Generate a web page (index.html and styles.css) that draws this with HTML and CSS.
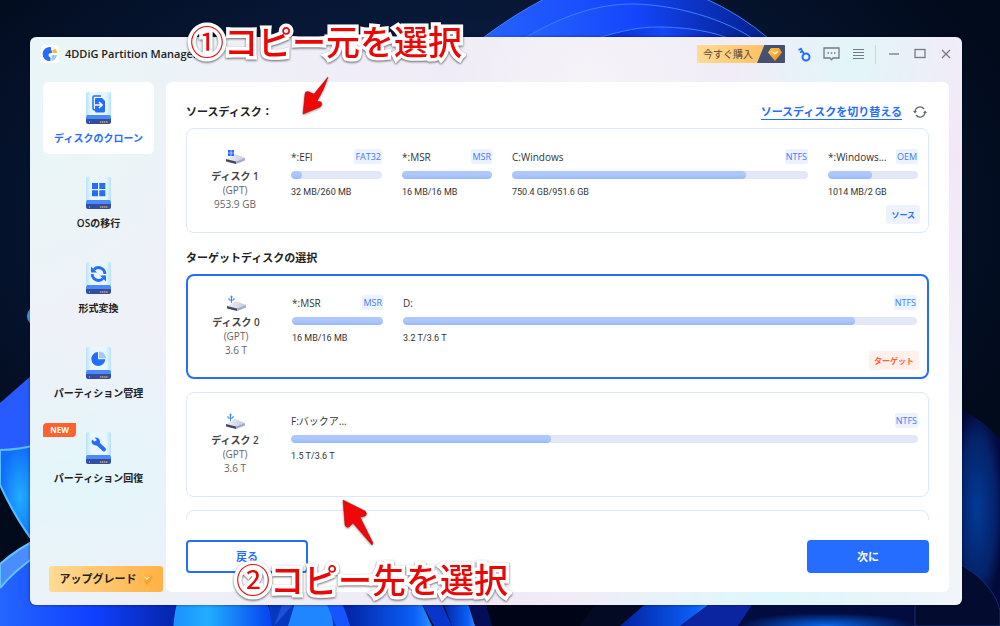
FILE: index.html
```html
<!DOCTYPE html>
<html lang="ja">
<head>
<meta charset="utf-8">
<meta name="viewport" content="width=device-width, initial-scale=1">
<title>4DDiG Partition Manager</title>
<link rel="stylesheet" href="styles.css">
</head>
<body>
<svg class="wallpaper" viewBox="0 0 1000 626" preserveAspectRatio="none" aria-hidden="true">
  <defs>
    <radialGradient id="night" cx="0.45" cy="0.35" r="0.6"><stop offset="0" stop-color="#0d2650"/><stop offset="0.5" stop-color="#08193a"/><stop offset="1" stop-color="#020b1c"/></radialGradient>
    <linearGradient id="petal" x1="0" y1="0" x2="1" y2="0"><stop offset="0" stop-color="#2563ff"/><stop offset="0.5" stop-color="#1545fb"/><stop offset="1" stop-color="#04208c"/></linearGradient>
    <linearGradient id="petalDeep" x1="0" y1="0" x2="1" y2="0"><stop offset="0" stop-color="#0a2cc8"/><stop offset="0.5" stop-color="#1547f8"/><stop offset="1" stop-color="#0620a0"/></linearGradient>
    <linearGradient id="leftBlue" x1="0" y1="0" x2="1" y2="0"><stop offset="0" stop-color="#2466ff"/><stop offset="0.5" stop-color="#1040ff"/><stop offset="1" stop-color="#0422a0"/></linearGradient>
    <radialGradient id="cyan"><stop offset="0" stop-color="#22adff"/><stop offset="1" stop-color="#0f6cff"/></radialGradient>
    <linearGradient id="cyanFold" x1="0" y1="0" x2="1" y2="0"><stop offset="0" stop-color="#1c90ff"/><stop offset="0.35" stop-color="#22adff"/><stop offset="1" stop-color="#0640f0"/></linearGradient>
    <radialGradient id="right"><stop offset="0" stop-color="#033a96"/><stop offset="0.7" stop-color="#052268"/><stop offset="1" stop-color="#03093a"/></radialGradient>
    <linearGradient id="fold" x1="0" y1="0" x2="1" y2="0"><stop offset="0" stop-color="#0220a0"/><stop offset="0.8" stop-color="#0b60f8"/><stop offset="1" stop-color="#2c91ff"/></linearGradient>
    <radialGradient id="glow" cx="0.5" cy="1"><stop offset="0" stop-color="#0868ef"/><stop offset="1" stop-color="#020c40"/></radialGradient>
  </defs>
  <rect width="1000" height="626" fill="url(#night)"/>
  <g stroke="#3a80ff" stroke-width="1">
    <path d="M484 37Q515 14 546 -2H704Q740 14 768 38Z" fill="url(#petal)"/>
    <path d="M525 38C565 14 600 4 632 4S715 14 752 38Z" fill="url(#petal)"/>
    <path d="M598 38C625 30 640 27 658 27S705 29 728 38Z" fill="url(#petalDeep)"/>
  </g>
  <circle cx="37" cy="316" r="10" fill="#4799ef"/>
  <path d="M0 403L40 368V450H0Z" fill="#285bff"/>
  <path d="M0 450Q18 450 40 444V550Q18 524 0 485Z" fill="url(#cyan)" stroke="#59bfff" stroke-width="2"/>
  <path d="M0 564Q18 548 40 538V626H0Z" fill="#4a8dff" stroke="#63c3ff" stroke-width="2"/>
  <path d="M0 588Q14 571 40 552V590H185V626H0Z" fill="url(#leftBlue)"/>
  <path d="M0 588Q14 571 36 556" fill="none" stroke="#63c3ff" stroke-width="2"/>
  <path d="M178 600H265Q275 615 272 640H173Q173 615 178 600Z" fill="url(#cyanFold)"/>
  <path d="M268 600H345L352 626H272Z" fill="#0638bd"/>
  <path d="M296 600H325Q333 612 333 626H288Z" fill="#2086ff"/>
  <path d="M274 626L284 600H297Z" fill="#1b50d8"/>
  <path d="M325 600H340L352 626H336Z" fill="#1455ff"/>
  <path d="M342 600H420L432 626H350Z" fill="url(#fold)"/>
  <path d="M420 600H440L452 626H434Z" fill="#0836ca"/>
  <path d="M442 600H467L475 626H452Z" fill="url(#fold)"/>
  <path d="M468 600H598L580 626H476Z" fill="#000417"/>
  <path d="M485 600L492 626H476L468 600Z" fill="#020f58"/>
  <path d="M598 600H650L620 626H580Z" fill="#030a24"/>
  <path d="M650 600H715L680 626H620Z" fill="url(#fold)"/>
  <path d="M715 600H760L738 626H680Z" fill="#0b25a0"/>
  <path d="M755 600H915V626H738Z" fill="url(#glow)"/>
  <path d="M915 600H1000V626H915Z" fill="#000105"/>
  <path d="M950 407Q980 414 1004 444V610L950 560Z" fill="url(#right)"/>
  <path d="M955 562Q992 580 1000 610V626H915V560Z" fill="#030c2f" stroke="#102d78"/>
</svg>

<svg class="symbols" aria-hidden="true">
  <defs>
    <linearGradient id="caseFill" x1="0" y1="0" x2="1" y2="0"><stop offset="0" stop-color="#b5e2fb"/><stop offset="0.2" stop-color="#e8f7ff"/><stop offset="0.8" stop-color="#e8f7ff"/><stop offset="1" stop-color="#b5e2fb"/></linearGradient>
    <linearGradient id="gem" x1="0" y1="0" x2="1" y2="1"><stop offset="0" stop-color="#ffd35c"/><stop offset="1" stop-color="#f57c0b"/></linearGradient>
    <linearGradient id="slab" x1="0" y1="0" x2="1" y2="0"><stop offset="0" stop-color="#f1f2f9"/><stop offset="1" stop-color="#c4c9df"/></linearGradient>
    <symbol id="case" viewBox="0 0 25 33">
      <path d="M2 0H23Q25 0 25 2V26H0V2Q0 0 2 0Z" fill="url(#caseFill)"/>
      <path d="M1 23H24L25 25V28H0V25Z" fill="#4b8afa"/>
      <path d="M0 27H25V30Q25 32 23 32H2Q0 32 0 30Z" fill="#344e9f"/>
      <path d="M3 30H4M14 30H22" stroke="#c9a274" stroke-width="1.500" stroke-dasharray="1.500 .5"/>
    </symbol>
    <symbol id="diamond" viewBox="0 0 14 13">
      <path d="M3 0H11L14 4.500L7 13L0 4.500Z" fill="url(#gem)"/>
      <path d="M3 0H11L9.500 4L7 6L4.500 4Z" fill="#ffb52f"/>
      <path d="M4.500 3.500L7 6L9.500 3.500" fill="none" stroke="#fff" stroke-width="1.200"/>
    </symbol>
    <symbol id="drive" viewBox="0 0 19 10">
      <path d="M0 5L9 0L19 4L10 8Z" fill="url(#slab)"/>
      <path d="M0 5L10 7.500V10L0 7.500Z" fill="#454a62"/>
      <path d="M10 7.500L19 4V6.500L10 10Z" fill="#a5abc7"/>
    </symbol>
    <symbol id="winDrive" viewBox="0 0 19 16">
      <use href="#drive" y="5" width="19" height="10"/>
      <path d="M2 1H4.700V3.700H2ZM5.300 1H8V3.700H5.300ZM2 4.300H4.700V7H2ZM5.300 4.300H8V7H5.300Z" fill="#246dff"/>
    </symbol>
    <symbol id="usbDrive" viewBox="0 0 19 16">
      <use href="#drive" y="6" width="19" height="10"/>
      <path d="M4.500 .2L6 2.200H3Z" fill="#3c82ff"/>
      <path d="M4.500 8V2M2 3V5H7V3" fill="none" stroke="#3c82ff"/>
    </symbol>
  </defs>
</svg>

<main class="window">
  <header class="titlebar">
    <svg class="logo" viewBox="0 0 18 18" aria-hidden="true">
      <rect width="18" height="18" rx="3" fill="#fff"/>
      <path d="M10 2.200A7 7 0 1 0 9.500 16V12.500A3 3 0 0 1 8 8.500L11 8V5.500H10Z" fill="#246dff"/>
      <path d="M10.500 10H16A7 7 0 0 1 10.500 16Z" fill="#a7c5ff"/>
      <path d="M11.500 8V5L14 3.500L16.500 8Z" fill="#ffb52e"/>
    </svg>
    <h1 class="app-name">4DDiG Partition Manager</h1>
    <button class="buy"><span class="buy-text">今すぐ購入</span><span class="buy-gem"><svg class="gem" aria-hidden="true"><use href="#diamond"/></svg></span></button>
    <button class="tool key" aria-label="登録"><svg viewBox="0 0 13 15" width="13" height="15"><circle cx="8" cy="10" r="3.500" fill="none" stroke="#246dff" stroke-width="2"/><path d="M6 7L2.500 1M.5 3L3.500 1.500M2 5.500L5 4" fill="none" stroke="#246dff" stroke-width="1.700"/></svg></button>
    <button class="tool chat" aria-label="フィードバック"><svg viewBox="0 0 17 14" width="17" height="14" fill="none" stroke="#777983" stroke-width="1.300"><path d="M1 1H16V11H10L8.500 12.800L7 11H1Z"/><path d="M4.500 6H6M7.800 6H9.300M11 6H12.500"/></svg></button>
    <button class="tool menu" aria-label="メニュー"><svg viewBox="0 0 11 12" width="11" height="12"><path d="M0 1.500H11M0 4.500H11M0 7.500H11M0 10.500H11" stroke="#777983"/></svg></button>
    <span class="divider"></span>
    <button class="tool minimize" aria-label="最小化"><svg viewBox="0 0 12 12" width="12" height="12"><path d="M1 6H11" stroke="#777983" stroke-width="1.300"/></svg></button>
    <button class="tool" aria-label="最大化"><svg viewBox="0 0 12 12" width="12" height="12"><rect x="1" y="1.500" width="10" height="8" fill="none" stroke="#777983" stroke-width="1.300"/></svg></button>
    <button class="tool" aria-label="閉じる"><svg viewBox="0 0 12 12" width="12" height="12"><path d="M2 2L10 10M10 2L2 10" stroke="#777983" stroke-width="1.300"/></svg></button>
  </header>

  <div class="body">
    <nav class="sidebar">
      <button class="nav-item active">
        <svg class="nav-icon" viewBox="0 0 25 33"><use href="#case"/><path d="M7 16V5Q7 4 8 4H15" fill="none" stroke="#246dff" stroke-width="1.500"/><path d="M7 16Q7 18 9 18" fill="none" stroke="#246dff" stroke-width="1.500"/><path d="M10 6H16L19 9V19Q19 20.500 17.500 20.500H10.500Q9 20.500 9 19V7Q9 6 10 6Z" fill="#246dff"/><path d="M9 13H15.500M13 10L16 13L13 16" fill="none" stroke="#fff" stroke-width="1.600"/></svg>
        <span>ディスクのクローン</span>
      </button>
      <button class="nav-item">
        <svg class="nav-icon" viewBox="0 0 25 33"><use href="#case"/><path d="M6 6H12V12H6ZM13.300 6H19.300V12H13.300ZM6 13.300H12V19.300H6ZM13.300 13.300H19.300V19.300H13.300Z" fill="#246dff"/></svg>
        <span>OSの移行</span>
      </button>
      <button class="nav-item">
        <svg class="nav-icon" viewBox="0 0 25 33"><use href="#case"/><path d="M8 7.500A6.300 6.300 0 0 1 18.800 12M17 16.500A6.300 6.300 0 0 1 6.200 12" fill="none" stroke="#246dff" stroke-width="2.800"/><path d="M5 4.500V10.500H11ZM20 19.500V13.500H14Z" fill="#246dff"/></svg>
        <span>形式変換</span>
      </button>
      <button class="nav-item">
        <svg class="nav-icon" viewBox="0 0 25 33"><use href="#case"/><path d="M12 5A7 7 0 1 0 19.300 12.300H12Z" fill="#246dff"/><path d="M13 4.500A7 7 0 0 1 20 11.300H13Z" fill="#a5c5ff"/></svg>
        <span>パーティション管理</span>
      </button>
      <button class="nav-item">
        <svg class="nav-icon" viewBox="0 0 25 33"><use href="#case"/><path d="M10.500 10.500L18 17.500" stroke="#246dff" stroke-width="4" stroke-linecap="round"/><path d="M8.500 5.500L10.500 7.500V9.500H8.500L6 7.500Q4.500 11 8 13Q13 14.500 14 10Q14 5 8.500 5.500Z" fill="#246dff"/></svg>
        <span>パーティション回復</span>
        <span class="new">NEW</span>
      </button>
      <button class="upgrade">アップグレード<svg class="gem" aria-hidden="true"><use href="#diamond"/></svg></button>
    </nav>

    <section class="panel">
      <div class="panel-head">
        <h2 class="heading">ソースディスク：</h2>
        <a class="switch" href="#">ソースディスクを切り替える</a>
        <button class="tool" aria-label="更新"><svg viewBox="0 0 14 14" width="14" height="14"><path d="M2 6.500A5 5 0 0 1 11 4M12 7.500A5 5 0 0 1 3 10" fill="none" stroke="#686a72" stroke-width="1.300"/><path d="M0 6H4L2 8.500ZM10 8H14L12 5.500Z" fill="#686a72"/></svg></button>
      </div>

      <article class="card">
        <div class="disk"><svg class="drive"><use href="#winDrive"/></svg><strong>ディスク 1</strong><span>(GPT)</span><span>953.9 GB</span></div>
        <div class="parts four">
          <div class="part"><span class="name">*:EFI</span><span class="fs">FAT32</span><div class="bar"><div class="fill" style="width:12%"></div></div><span class="size">32 MB/260 MB</span></div>
          <div class="part"><span class="name">*:MSR</span><span class="fs">MSR</span><div class="bar"><div class="fill" style="width:100%"></div></div><span class="size">16 MB/16 MB</span></div>
          <div class="part"><span class="name">C:Windows</span><span class="fs">NTFS</span><div class="bar"><div class="fill" style="width:79%"></div></div><span class="size">750.4 GB/951.6 GB</span></div>
          <div class="part"><span class="name">*:Windows...</span><span class="fs">OEM</span><div class="bar"><div class="fill" style="width:49%"></div></div><span class="size">1014 MB/2 GB</span></div>
        </div>
        <span class="role">ソース</span>
      </article>

      <h2 class="heading second">ターゲットディスクの選択</h2>

      <div class="list">
        <article class="card selected">
          <div class="disk"><svg class="drive"><use href="#usbDrive"/></svg><strong>ディスク 0</strong><span>(GPT)</span><span>3.6 T</span></div>
          <div class="parts two">
            <div class="part"><span class="name">*:MSR</span><span class="fs">MSR</span><div class="bar"><div class="fill" style="width:100%"></div></div><span class="size">16 MB/16 MB</span></div>
            <div class="part"><span class="name">D:</span><span class="fs">NTFS</span><div class="bar"><div class="fill" style="width:88%"></div></div><span class="size">3.2 T/3.6 T</span></div>
          </div>
          <span class="role target">ターゲット</span>
        </article>
        <article class="card">
          <div class="disk"><svg class="drive"><use href="#usbDrive"/></svg><strong>ディスク 2</strong><span>(GPT)</span><span>3.6 T</span></div>
          <div class="parts">
            <div class="part"><span class="name">F:バックア...</span><span class="fs">NTFS</span><div class="bar"><div class="fill" style="width:41.4%"></div></div><span class="size">1.5 T/3.6 T</span></div>
          </div>
        </article>
        <article class="card"></article>
      </div>

      <footer class="actions">
        <button class="btn back">戻る</button>
        <button class="btn next">次に</button>
      </footer>
    </section>
  </div>
</main>

<p class="note note-source"><span class="num">①</span>コピー元を選択</p>
<p class="note note-target"><span class="num">②</span>コピー先を選択</p>
<svg class="arrow arrow-source" viewBox="0 0 28 40" aria-hidden="true"><path d="M26 1L12 18L6 15.500Q3 15 3 18L1 38L18 31Q21 29 19 26L15 25Q22 14 26 1Z" fill="#ef0808" stroke="#b80000" stroke-width=".5"/></svg>
<svg class="arrow arrow-target" viewBox="0 0 34 48" aria-hidden="true"><path d="M1 1L23 12Q26 15 23 17L18 18L31 44L30 46L11 24L7 28Q4 29 3 26Z" fill="#ef0808" stroke="#b80000" stroke-width=".5"/></svg>
</body>
</html>
```
FILE: styles.css
```css
* { box-sizing: border-box; }

body {
  position: relative;
  display: flex;
  height: 100vh;
  margin: 0;
  padding: 37px 38px 21px 30px;
  overflow: hidden;
  background: #06142c;
  color: #222;
  font-family: "Open Sans", "Noto Sans CJK JP", sans-serif;
  font-size: 10px;
  line-height: 14px;
}

button {
  padding: 0;
  border: 0;
  background: none;
  color: inherit;
  font: inherit;
  cursor: pointer;
}

svg { display: block; flex: none; }

.wallpaper {
  position: absolute;
  inset: 0;
  width: 100%;
  height: 100%;
}

.symbols { position: absolute; width: 0; height: 0; }

.window {
  position: relative;
  display: flex;
  flex: 1;
  flex-direction: column;
  min-width: 0;
  border-radius: 6px;
  background:
    radial-gradient(circle at 88% 4%, #e1f6f8 0, transparent 12%),
    radial-gradient(circle at 80% 100%, #def7fa 0, transparent 22%),
    radial-gradient(ellipse at 5% 78%, #e3f6fa 0, transparent 24%),
    radial-gradient(circle at 0 12%, #e9f6f7 0, transparent 26%),
    radial-gradient(circle at 60% 8%, #f5f4f8 0, transparent 18%),
    radial-gradient(circle at 100% 22%, #f3e7f7 0, transparent 28%),
    linear-gradient(100deg, #eff2f8, #f0eaf7 55%, #f3f5f8);
  box-shadow: 0 0 3px rgba(0, 0, 20, .5);
}

.titlebar {
  display: flex;
  align-items: center;
  height: 45px;
  padding: 0 9px 11px 11px;
}

.logo { width: 18px; height: 18px; }

.app-name {
  flex: 1;
  margin: 0 0 0 6px;
  font-size: 11px;
  font-weight: 600;
  line-height: 18px;
  white-space: nowrap;
}

.buy {
  display: flex;
  height: 18px;
  margin-right: 12px;
  border-radius: 1px;
  overflow: hidden;
  background: linear-gradient(90deg, #ffdb94, #ffba55);
}

.buy-text { padding-left: 6px; line-height: 18px; color: #54433b; }

.buy-gem {
  display: flex;
  align-items: center;
  justify-content: flex-end;
  width: 32px;
  padding-right: 3px;
  background: linear-gradient(112deg, transparent 10px, #465070 11px);
}

.gem { width: 14px; height: 13px; }

.tool {
  display: grid;
  flex: none;
  place-items: center;
  width: 14px;
  height: 18px;
  margin-left: 12px;
}

.key { margin-left: 0; }
.chat { width: 17px; }
.menu { width: 12px; }
.minimize { margin-left: 11px; }

.divider {
  width: 1px;
  height: 19px;
  margin-left: 11px;
  background: #d1d3db;
}

.body { display: flex; flex: 1; min-height: 0; padding: 0 13px 13px 0; }

.sidebar {
  display: flex;
  flex: none;
  flex-direction: column;
  gap: 13px;
  width: 136px;
  padding: 0 12px 0 13px;
}

.nav-item {
  position: relative;
  display: flex;
  flex-direction: column;
  align-items: center;
  gap: 6px;
  height: 72px;
  padding-top: 10px;
  border-radius: 6px;
  font-weight: 600;
  white-space: nowrap;
}

.nav-item.active { background: #fff; color: #246dff; }
.nav-icon { width: 25px; height: 33px; }

.new {
  position: absolute;
  top: 1px;
  left: 0;
  width: 33px;
  border-radius: 4px 0 4px 0;
  background: #ff612f;
  color: #fff;
  font-size: 8px;
  font-weight: 700;
}

.upgrade {
  display: flex;
  align-items: center;
  justify-content: center;
  gap: 4px;
  width: 114px;
  height: 26px;
  margin: auto 0 0 6px;
  border-radius: 3px;
  background: linear-gradient(90deg, #ffdb94, #ffb144);
  font-size: 11px;
  font-weight: 600;
  white-space: nowrap;
}

.upgrade .gem { width: 12px; opacity: .8; }

.panel {
  display: flex;
  flex: 1;
  flex-direction: column;
  min-width: 0;
  padding: 20px 20px 19px;
  border-radius: 6px;
  background: #fff;
}

.panel-head { display: flex; align-items: center; margin-bottom: 6px; }

.heading {
  flex: 1;
  margin: 0;
  font-size: 11px;
  font-weight: 600;
  line-height: 20px;
}

.heading.second { flex: none; margin: 15px 0 6px; }

.switch {
  border-bottom: 1px solid #246dff;
  color: #246dff;
  font-size: 11px;
  font-weight: 600;
  line-height: 14px;
  text-decoration: none;
}

.panel-head .tool { margin: 0 2px 0 11px; }

.card {
  display: grid;
  flex: none;
  grid-template-columns: 96px 1fr;
  grid-template-rows: 49px 19px;
  row-gap: 7px;
  padding: 20px 8px 8px 0;
  border: 1px solid #dce8ff;
  border-radius: 8px;
}

.card.selected { padding: 19px 8px 7px 0; border: 2px solid #246dff; }

.disk {
  display: flex;
  grid-row: span 2;
  flex-direction: column;
  align-items: center;
  color: #666;
}

.disk strong { margin-top: 4px; color: #444; font-weight: 600; }
.drive { width: 19px; height: 16px; }

.parts { display: grid; gap: 20px; margin: 0 2px 0 8px; }
.parts.four { grid-template-columns: 91px 90px 1fr 90px; }
.parts.two { grid-template-columns: 91px 1fr; }

.part {
  display: grid;
  grid-template-columns: 1fr auto;
  grid-template-rows: 15px 8px 12px;
  row-gap: 7px;
  min-width: 0;
}

.name { line-height: 17px; color: #333; }

.fs {
  padding: 0 1px;
  border-radius: 2px;
  background: #edf2ff;
  color: #3b7cff;
  font-size: 9px;
  line-height: 15px;
}

.bar {
  grid-column: span 2;
  border-radius: 4px;
  overflow: hidden;
  background: #e2e8f8;
}

.fill {
  height: 100%;
  border-radius: 4px;
  background: linear-gradient(#aec8fd 45%, #98b9fc);
}

.size {
  grid-column: span 2;
  color: #333;
  font-family: Roboto, "Open Sans", sans-serif;
  font-size: 9px;
  line-height: 12px;
}

.role {
  grid-column: 2;
  justify-self: end;
  padding: 0 5px;
  border-radius: 3px;
  background: #edf2ff;
  color: #246dff;
  font-size: 8px;
  font-weight: 600;
  line-height: 19px;
}

.role.target { background: #fff0ec; color: #ff612f; }

.list {
  display: flex;
  flex: 1;
  flex-direction: column;
  gap: 13px;
  min-height: 0;
  overflow: hidden;
}

.actions { display: flex; justify-content: space-between; margin-top: 20px; }

.btn {
  width: 122px;
  height: 33px;
  border: 2px solid #246dff;
  border-radius: 4px;
  font-size: 11px;
  font-weight: 600;
}

.back { color: #246dff; }
.next { background: #246dff; color: #fff; }

.note {
  position: absolute;
  margin: 0;
  color: #e80808;
  font-family: "Noto Sans CJK JP", sans-serif;
  font-size: 34px;
  font-weight: 500;
  line-height: 40px;
  white-space: nowrap;
  -webkit-text-stroke: 7px #fff;
  paint-order: stroke fill;
  filter: drop-shadow(0 1px 1px rgba(0, 0, 0, .6));
}

.num { font-weight: 400; }
.note-source { top: 21px; left: 190px; }
.note-target { top: 559px; left: 236px; }

.arrow { position: absolute; filter: drop-shadow(0 1px 1px rgba(0, 0, 0, .4)); }
.arrow-source { top: 76px; left: 302px; width: 28px; height: 40px; }
.arrow-target { top: 499px; left: 342px; width: 34px; height: 48px; }
```
